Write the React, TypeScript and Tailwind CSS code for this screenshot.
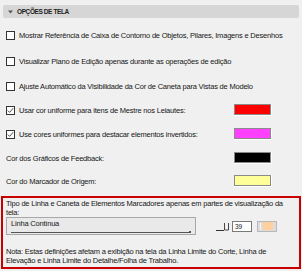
import React from 'react';

interface OptionRow {
  label: string;
  checkbox?: boolean;
  checked?: boolean;
  swatch?: string;
  height: string;
}

const rows: OptionRow[] = [
  { label: 'Mostrar Referência de Caixa de Contorno de Objetos, Pilares, Imagens e Desenhos', checkbox: true, height: 'h-[26px]' },
  { label: 'Visualizar Plano de Edição apenas durante as operações de edição', checkbox: true, height: 'h-[26px]' },
  { label: 'Ajuste Automático da Visibilidade da Cor de Caneta para Vistas de Modelo', checkbox: true, height: 'h-[24px]' },
  { label: 'Usar cor uniforme para itens de Mestre nos Leiautes:', checkbox: true, checked: true, swatch: 'bg-[#ff0000]', height: 'h-[24px]' },
  { label: 'Use cores uniformes para destacar elementos invertidos:', checkbox: true, checked: true, swatch: 'bg-[#ff40ff]', height: 'h-[24px]' },
  { label: 'Cor dos Gráficos de Feedback:', swatch: 'bg-[#000000]', height: 'h-[24px]' },
  { label: 'Cor do Marcador de Origem:', swatch: 'bg-[#ffff99]', height: 'h-[22px]' },
];

const CheckBox = ({ checked }: { checked?: boolean }) => (
  <div className="w-[9px] h-[9px] shrink-0 border border-[#333] bg-white flex items-center justify-center">
    {checked && (
      <svg width="7" height="7" viewBox="0 0 7 7">
        <path d="M0.8 3.6 L2.6 5.4 L6.2 1.2" fill="none" stroke="#333" strokeWidth="0.9" />
      </svg>
    )}
  </div>
);

const Swatch = ({ color }: { color: string }) => (
  <div className="w-[38px] h-[12px] shrink-0 border-b border-r border-white">
    <div className={`w-full h-full border-[1.5px] border-[#8a8a8a] ${color}`}></div>
  </div>
);

const App = () => {
  return (
    <div className="w-[302px] h-[271px] overflow-hidden bg-[#f0f0f0] text-[#161616] font-['Liberation_Sans',Arial,sans-serif] text-[7.5px] leading-[9px] tracking-[-0.2px]">
      <div className="pt-[5px] px-[3px]">
        <div className="h-[13px] rounded-[2px] bg-[#d6d6d6] flex items-center pl-[5px] gap-[4px]">
          <svg width="5" height="4" viewBox="0 0 5 4">
            <path d="M0 0.5 H5 L2.5 3.5 Z" fill="#555" />
          </svg>
          <span className="font-bold text-[6.5px] tracking-[-0.4px] text-[#222]">OPÇÕES DE TELA</span>
        </div>
      </div>

      <div className="pt-[4px]">
        {rows.map((row) => (
          <div key={row.label} className={`${row.height} flex items-center pl-[6px] pr-[30px]`}>
            {row.checkbox && <CheckBox checked={row.checked} />}
            <span className={`${row.checkbox ? 'ml-[4px]' : 'ml-[0px]'} whitespace-nowrap flex-1`}>
              {row.label}
            </span>
            {row.swatch && <Swatch color={row.swatch} />}
          </div>
        ))}
      </div>

      <div className="mt-[4px] mx-[1px] h-[73px] border-2 border-[#c80000] pl-[3px] pr-[6px] pt-[1px]">
        <div>
          Tipo de Linha e Caneta de Elementos Marcadores apenas em partes de visualização da tela:
        </div>
        <div className="flex items-center">
          <div className="w-[190px] h-[18px] border border-[#a8a8a8] bg-[#e9e9e9] flex flex-col px-[4px]">
            <span className="pt-[1px]">Linha Contínua</span>
            <div className="mt-[3px] flex items-center">
              <div className="flex-1 h-[1px] bg-[#555]"></div>
              <div className="w-[2px] h-[2px] bg-[#555]"></div>
            </div>
          </div>
          <svg width="14" height="10" viewBox="0 0 14 10" className="ml-[20px]">
            <path d="M0 9.5 H8" stroke="#333" strokeWidth="1" />
            <path d="M8.5 2 V9 H12.5 V2" fill="none" stroke="#333" strokeWidth="0.9" />
          </svg>
          <div className="ml-[2px] w-[20px] h-[11px] border border-[#7a7a7a] bg-white text-[6.5px] leading-[9px] pl-[2px] tracking-normal">
            39
          </div>
          <div className="ml-[5px] w-[20px] h-[11px] border border-[#b8b8b8] bg-[#dcdcdc] flex items-center pl-[2px]">
            <div className="w-[1px] h-[7px] bg-[#f4f4f4]"></div>
            <div className="ml-[2px] w-[10px] h-[8px] bg-[#ffd09c]"></div>
          </div>
        </div>
        <div className="mt-[12px]">
          Nota: Estas definições afetam a exibição na tela da Linha Limite do Corte, Linha de Elevação e Linha Limite do Detalhe/Folha de Trabalho.
        </div>
      </div>
    </div>
  );
};

export default App;
